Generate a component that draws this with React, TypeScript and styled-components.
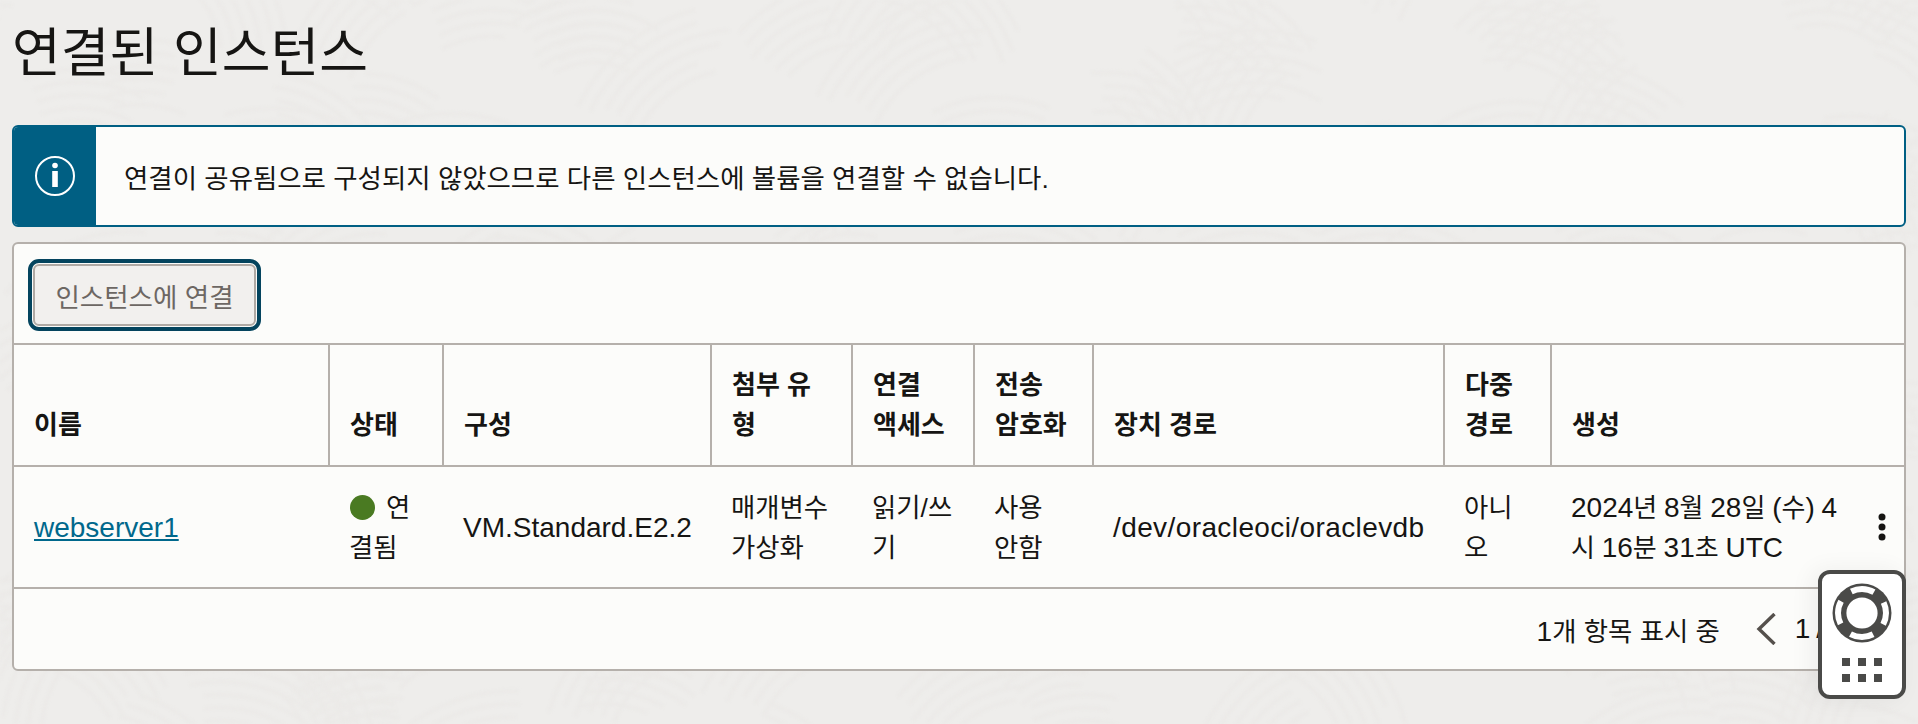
import React, { useMemo } from 'react';
import styled, { createGlobalStyle } from 'styled-components';

const Global = createGlobalStyle`
  html, body { margin: 0; padding: 0; height: 100%; background: #eeedeb; overflow: hidden; }
  body { font-family: "Liberation Sans", "Noto Sans CJK KR", sans-serif; color: #161513; font-size: 28px; }
`;

const Page = styled.main`
  position: relative;
  width: 1918px;
  height: 724px;
  padding: 0 12px;
  box-sizing: border-box;
  overflow: hidden;
`;

const Texture = styled.svg`
  position: absolute;
  inset: 0;
  filter: blur(1.5px);
`;

const Content = styled.div`
  position: relative;
`;

const Title = styled.h1`
  margin: 0;
  height: 125px;
  padding-top: 20px;
  box-sizing: border-box;
  font-size: 53px;
  line-height: 68px;
  font-weight: 400;
`;

const Banner = styled.div`
  display: flex;
  height: 102px;
  border: 2px solid #005f83;
  border-radius: 6px;
  background: #fcfcfa;
  box-sizing: border-box;
  overflow: hidden;
`;

const BannerIcon = styled.div`
  flex: 0 0 82px;
  background: #005f83;
  display: flex;
  align-items: center;
  justify-content: center;
`;

const BannerText = styled.div`
  padding-left: 28px;
  font-size: 26.45px;
  display: flex;
  align-items: center;
`;

const Card = styled.section`
  margin-top: 15px;
  height: 429px;
  border: 2px solid #b5b0ab;
  border-radius: 6px;
  background: #fcfcfa;
  box-sizing: border-box;
`;

const Toolbar = styled.div`
  height: 99px;
  padding: 15px 0 0 14px;
  box-sizing: border-box;
`;

const Button = styled.button`
  border: 2px solid #b0aaa5;
  outline: 4px solid #04445e;
  outline-offset: 1px;
  margin: 5px;
  width: 223px;
  height: 62px;
  border-radius: 6px;
  background: #f2f0ee;
  color: #6d6763;
  font: 26.5px "Liberation Sans", "Noto Sans CJK KR", sans-serif;
  padding: 0;
`;

const Table = styled.table`
  width: 100%;
  table-layout: fixed;
  border-collapse: collapse;
`;

const Th = styled.th`
  border-top: 2px solid #b5b0ab;
  border-bottom: 2px solid #b5b0ab;
  border-left: 2px solid #b5b0ab;
  &:first-child { border-left: 0; }
  padding: 20px;
  height: 120px;
  box-sizing: border-box;
  text-align: left;
  vertical-align: bottom;
  font-size: 26px;
  line-height: 40px;
  font-weight: 700;
`;

const Td = styled.td`
  border-bottom: 2px solid #b5b0ab;
  padding: 21px 20px 19px;
  line-height: 40px;
  vertical-align: middle;
  position: relative;
`;

const DateCell = styled(Td)`
  padding-right: 56px;
  word-spacing: -1px;
`;

const PathCell = styled(Td)`
  letter-spacing: 0.4px;
`;

const Ko = styled.span`
  font-size: 26.4px;
`;

const DateKo = styled.span`
  font-size: 26px;
`;

const Link = styled.a`
  color: #00688c;
  text-decoration: underline;
`;

const Dot = styled.span`
  display: inline-block;
  width: 25px;
  height: 25px;
  border-radius: 50%;
  background: #4a7a22;
  margin: 0 11px 0 1px;
  vertical-align: -3px;
`;

const Kebab = styled.svg`
  position: absolute;
  right: 18px;
  top: 46px;
`;

const Footer = styled.div`
  height: 80px;
  display: flex;
  justify-content: flex-end;
  align-items: center;
  padding-right: 80px;
`;

const Count = styled.span`
  margin-right: 36px;
`;

const PageNum = styled.span`
  margin-left: 19px;
  word-spacing: -2px;
`;

const Help = styled.div`
  position: absolute;
  left: 1818px;
  top: 570px;
  width: 88px;
  height: 129px;
  box-sizing: border-box;
  border: 4px solid #4a4a48;
  border-radius: 12px;
  background: #fff;
  box-shadow: -6px 0 24px rgba(0,0,0,.06);
  display: flex;
  flex-direction: column;
  align-items: center;
  padding-top: 9px;
  gap: 15px;
`;

const widths = [315, 114, 268, 141, 122, 119, 351, 107];
const heads: React.ReactNode[] = ['이름', '상태', '구성', '첨부 유형', <>연결<br />액세스</>, <>전송<br />암호화</>, '장치 경로', <>다중<br />경로</>, '생성'];

function useSwirls() {
  return useMemo(() => {
    let seed = 98765;
    const rnd = () => {
      seed = (seed * 1103515245 + 12345) & 0x7fffffff;
      return seed / 0x7fffffff;
    };
    const out: string[] = [];
    for (let gy = -60; gy < 780; gy += 85) {
      for (let gx = -60; gx < 1980; gx += 125) {
        const cx = gx + rnd() * 90;
        const cy = gy + 110 + rnd() * 90;
        const a0 = -Math.PI * (0.15 + rnd() * 0.7) - 0.5;
        const span = 0.7 + rnd() * 0.5;
        const r0 = 70 + rnd() * 50;
        for (let k = 0; k < 6; k++) {
          const r = r0 + k * 13;
          const a1 = a0 + rnd() * 0.12;
          const a2 = a1 + span - rnd() * 0.25;
          out.push(
            `M${(cx + r * Math.cos(a1)).toFixed(1)} ${(cy + r * Math.sin(a1)).toFixed(1)}A${r.toFixed(1)} ${r.toFixed(1)} 0 0 1 ${(cx + r * Math.cos(a2)).toFixed(1)} ${(cy + r * Math.sin(a2)).toFixed(1)}`
          );
        }
      }
    }
    return out.join('');
  }, []);
}

export default function App() {
  const swirls = useSwirls();
  return (
    <Page>
      <Global />
      <Texture width="1918" height="724" viewBox="0 0 1918 724" fill="none">
        <path d={swirls} stroke="#e8e7e4" strokeWidth="3.5" strokeOpacity="0.4" />
      </Texture>
      <Content>
        <Title>연결된 인스턴스</Title>
        <Banner>
          <BannerIcon>
            <svg width="42" height="42" viewBox="0 0 42 42" fill="none">
              <circle cx="21" cy="21" r="19" stroke="#fff" strokeWidth="2" />
              <circle cx="21" cy="10.5" r="2.8" fill="#fff" />
              <rect x="18.2" y="16" width="5.6" height="16" fill="#fff" />
            </svg>
          </BannerIcon>
          <BannerText>연결이 공유됨으로 구성되지 않았으므로 다른 인스턴스에 볼륨을 연결할 수 없습니다.</BannerText>
        </Banner>
        <Card>
          <Toolbar><Button>인스턴스에 연결</Button></Toolbar>
          <Table>
            <colgroup>
              {widths.map((w, i) => <col key={i} style={{ width: w }} />)}
              <col />
            </colgroup>
            <thead>
              <tr>{heads.map((h, i) => <Th key={i}>{h}</Th>)}</tr>
            </thead>
            <tbody>
              <tr>
                <Td><Link href="#">webserver1</Link></Td>
                <Td><Dot /><Ko>연결됨</Ko></Td>
                <Td>VM.Standard.E2.2</Td>
                <Td><Ko>매개변수 가상화</Ko></Td>
                <Td><Ko>읽기/쓰기</Ko></Td>
                <Td><Ko>사용<br />안함</Ko></Td>
                <PathCell>/dev/oracleoci/oraclevdb</PathCell>
                <Td><Ko>아니오</Ko></Td>
                <DateCell>
                  2024<DateKo>년</DateKo> 8<DateKo>월</DateKo> 28<DateKo>일</DateKo> (<DateKo>수</DateKo>) 4 <DateKo>시</DateKo> 16<DateKo>분</DateKo> 31<DateKo>초</DateKo> UTC
                  <Kebab width="8" height="30" viewBox="0 0 8 30" fill="#161513">
                    <circle cx="4" cy="4" r="3.5" /><circle cx="4" cy="14" r="3.5" /><circle cx="4" cy="24" r="3.5" />
                  </Kebab>
                </DateCell>
              </tr>
            </tbody>
          </Table>
          <Footer>
            <Count>1<Ko>개 항목 표시 중</Ko></Count>
            <svg width="20" height="32" viewBox="0 0 20 32" fill="none"><path d="M18.5 1 3 16l15.5 15" stroke="#55504c" strokeWidth="3.4" /></svg>
            <PageNum>1 /</PageNum>
          </Footer>
        </Card>
      </Content>
      <Help>
        <svg width="60" height="60" viewBox="0 0 60 60">
          <circle cx="30" cy="30" r="29.5" fill="#4a4a48" />
          <circle cx="30" cy="30" r="24" fill="none" stroke="#fff" strokeWidth="6" strokeDasharray="23.5 14.2" strokeDashoffset="11.75" />
          <circle cx="30" cy="30" r="15.6" fill="#fff" />
        </svg>
        <svg width="40" height="24" viewBox="0 0 40 24" fill="#4a4a48">
          <rect x="0" y="0" width="8" height="8" /><rect x="16" y="0" width="8" height="8" /><rect x="32" y="0" width="8" height="8" />
          <rect x="0" y="16" width="8" height="8" /><rect x="16" y="16" width="8" height="8" /><rect x="32" y="16" width="8" height="8" />
        </svg>
      </Help>
    </Page>
  );
}
